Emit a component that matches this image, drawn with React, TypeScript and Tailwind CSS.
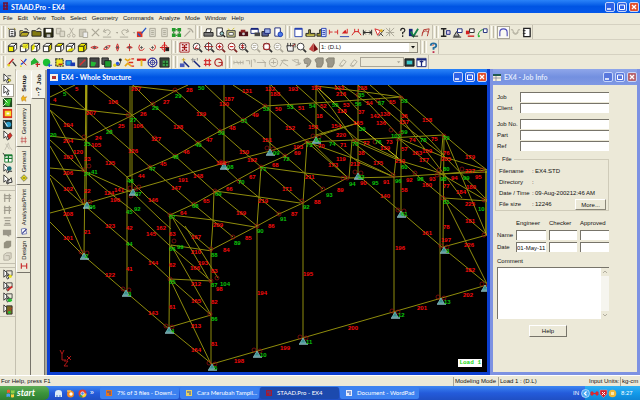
import React from "react";

type Pt = [number, number];

// members drawn as polylines, coordinates in canvas units
const members: Pt[][] = [
  // base lines
  [[50, 222], [84, 256], [127, 293], [169, 329], [212, 364], [487, 285]],
  [[50, 213], [84, 204], [160, 182], [224, 163], [270, 151], [330, 132], [358, 123]],
  // roof chords
  [[50, 97], [75, 85]],
  [[50, 104], [86, 110], [129, 115]],
  [[84, 139], [131, 116], [152, 104], [175, 91], [188, 85]],
  [[132, 86], [175, 91]],
  [[127, 177], [150, 167], [175, 156], [198, 143], [220, 131], [243, 120], [265, 106], [330, 102], [401, 97]],
  [[170, 215], [194, 204], [217, 191], [261, 167], [285, 156], [307, 142], [354, 140], [443, 135]],
  [[211, 250], [257, 226], [279, 214], [303, 203], [321, 192], [347, 178], [394, 177], [441, 174], [487, 170]],
  [[50, 136], [84, 140]],
  [[50, 168], [84, 171]],
  [[50, 110], [84, 139]],
  [[50, 140], [84, 171]],
  [[50, 175], [84, 205]],
  [[50, 110], [84, 171]],
  [[50, 146], [84, 205]],
  [[50, 178], [84, 256]],
  // columns
  [[86, 85], [84, 256]],
  [[87, 85], [86, 205]],
  [[132, 86], [132, 193]],
  [[130, 86], [130, 177]],
  [[127, 177], [127, 293]],
  [[170, 215], [169, 329]],
  [[214, 191], [213, 221], [211, 250], [211, 364]],
  [[261, 167], [259, 197], [257, 226], [257, 353]],
  [[307, 142], [305, 173], [303, 203], [303, 341]],
  [[398, 138], [394, 177], [394, 315]],
  [[352, 140], [349, 178]],
  [[443, 135], [440, 174], [440, 301]],
  [[444, 135], [443, 247]],
  [[401, 97], [401, 214]],
  [[358, 85], [358, 175]],
  [[270, 85], [270, 151]],
  [[224, 85], [224, 166]],
  [[316, 85], [316, 139]],
  // rafters across the bays
  [[50, 77], [86, 110], [110, 132], [150, 167], [193, 204], [233, 237]],
  [[84, 139], [110, 162], [127, 177], [148, 198], [170, 215], [211, 250]],
  [[93, 85], [132, 115], [155, 139], [175, 156], [214, 191], [257, 226]],
  [[84, 171], [110, 193], [132, 210], [169, 245], [211, 281]],
  [[84, 171], [133, 193], [160, 219], [171, 229]],
  [[84, 205], [128, 243], [153, 263], [169, 278], [211, 315]],
  [[152, 104], [198, 143], [239, 181], [279, 214]],
  [[175, 90], [220, 131], [261, 167], [303, 203]],
  [[205, 85], [224, 103], [243, 120], [285, 156], [323, 189]],
  [[233, 85], [265, 106], [307, 142], [347, 177]],
  [[271, 85], [290, 105], [330, 139], [358, 162], [394, 177]],
  [[296, 85], [316, 103], [358, 140], [401, 160]],
  [[133, 85], [152, 104]],
  // short bay diagonals
  [[171, 215], [213, 220], [255, 227]],
  [[215, 191], [259, 197], [300, 203]],
  [[261, 167], [305, 173], [347, 178]],
  [[307, 142], [358, 160], [394, 177]],
  [[171, 245], [212, 251]],
  [[170, 279], [212, 281]],
  [[170, 327], [211, 315]],
  [[171, 215], [208, 278]],
  [[171, 245], [211, 315]],
  [[170, 279], [211, 364]],
  [[185, 226], [218, 278]],
  // right hand frame
  [[388, 85], [427, 119], [444, 135], [470, 157], [487, 170]],
  [[358, 85], [401, 123], [443, 155], [487, 200]],
  [[370, 85], [401, 112], [430, 140], [444, 155]],
  [[398, 158], [420, 178], [444, 198], [487, 235]],
  [[354, 143], [394, 175]],
  [[312, 143], [347, 177]],
  [[358, 175], [401, 212], [443, 248], [487, 284]],
  [[444, 198], [487, 201]],
  [[443, 247], [487, 235]],
  [[444, 135], [487, 236]],
  [[444, 198], [487, 284]],
  [[398, 138], [444, 157], [487, 170]],
  [[352, 140], [398, 160], [440, 173]],
  [[398, 138], [441, 174], [487, 201]],
  [[401, 118], [444, 174], [462, 198]],
  [[441, 174], [487, 172]],
  [[316, 135], [358, 123]],
  [[316, 86], [358, 91], [401, 97]],
  [[335, 85], [358, 110]],
  [[342, 85], [370, 105], [401, 138]],
  [[316, 88], [333, 110], [354, 140]],
];

const brightMembers: Pt[][] = [
  [[86, 85], [86, 110]],
  [[318, 88], [360, 127], [398, 158]],
  [[486, 171], [486, 235]],
];

type Label = [string, number, number];

const memberLabels: Label[] = [
  ["5", 75, 91], ["4", 53, 102], ["207", 86, 115], ["207", 131, 91], ["106", 108, 104], ["26", 140, 116],
  ["25", 118, 128], ["104", 63, 127], ["24", 95, 140], ["204", 63, 143], ["105", 91, 147], ["106", 133, 128],
  ["103", 63, 159], ["120", 73, 154], ["23", 84, 161], ["125", 105, 165], ["126", 128, 153], ["127", 151, 141],
  ["206", 63, 175], ["44", 138, 178], ["102", 63, 191], ["22", 84, 193], ["124", 104, 195], ["141", 114, 192],
  ["190", 110, 202], ["146", 148, 202], ["208", 63, 216], ["21", 84, 234], ["101", 63, 240], ["123", 105, 228],
  ["42", 126, 230], ["145", 146, 236], ["144", 148, 265], ["41", 126, 271], ["122", 105, 277], ["143", 148, 315],
  ["28", 186, 92], ["27", 163, 104], ["129", 196, 116], ["128", 173, 129], ["131", 242, 93], ["132", 265, 91],
  ["188", 270, 96], ["193", 288, 91], ["134", 311, 90], ["130", 219, 106], ["187", 224, 101], ["50", 275, 111],
  ["51", 298, 110], ["52", 320, 108], ["49", 252, 117], ["18", 316, 118], ["152", 285, 130], ["153", 308, 129],
  ["48", 229, 130], ["47", 206, 142], ["151", 262, 142], ["46", 183, 154], ["45", 160, 166], ["150", 239, 154],
  ["192", 247, 162], ["193", 293, 149], ["69", 294, 155], ["70", 318, 148], ["68", 272, 167], ["189", 216, 165],
  ["67", 249, 179], ["191", 178, 182], ["148", 193, 178], ["147", 171, 190], ["66", 226, 191], ["65", 203, 203],
  ["64", 180, 215], ["171", 282, 191], ["169", 236, 215], ["219", 258, 203], ["211", 305, 179], ["209", 213, 227],
  ["88", 314, 204], ["87", 291, 216], ["86", 268, 228], ["162", 156, 230], ["63", 169, 236], ["167", 191, 239],
  ["85", 245, 240], ["84", 223, 252], ["210", 191, 254], ["62", 169, 267], ["166", 190, 270], ["193", 198, 265],
  ["83", 211, 273], ["212", 191, 286], ["98", 216, 291], ["165", 191, 303], ["61", 169, 309], ["82", 211, 304],
  ["213", 191, 328], ["81", 211, 346], ["164", 191, 352], ["198", 234, 363], ["199", 280, 350], ["194", 257, 295],
  ["195", 303, 276], ["196", 395, 250], ["200", 348, 330], ["201", 417, 310], ["202", 463, 297], ["182", 465, 272],
  ["226", 464, 247], ["197", 441, 242], ["78", 443, 229], ["161", 422, 235], ["181", 465, 223], ["77", 443, 188],
  ["225", 465, 206], ["180", 466, 189], ["184", 456, 194], ["95", 475, 179], ["227", 465, 173], ["179", 465, 159],
  ["76", 443, 155], ["205", 441, 161], ["75", 431, 141], ["158", 422, 122], ["55", 389, 104], ["54", 366, 105],
  ["53", 343, 107], ["133", 334, 90], ["216", 336, 96], ["138", 357, 90], ["37", 358, 114], ["142", 370, 118],
  ["138", 380, 116], ["136", 376, 125], ["165", 353, 125], ["154", 331, 128], ["118", 337, 113], ["36", 401, 118],
  ["157", 399, 124], ["220", 336, 137], ["71", 340, 147], ["72", 363, 145], ["73", 386, 144], ["74", 409, 142],
  ["139", 380, 150], ["57", 401, 151], ["183", 412, 155], ["159", 422, 153], ["177", 419, 162], ["38", 358, 155],
  ["119", 336, 161], ["173", 328, 167], ["212", 350, 166], ["175", 373, 165], ["210", 395, 163], ["91", 383, 184],
  ["92", 406, 182], ["93", 429, 181], ["94", 451, 180], ["90", 360, 185], ["160", 422, 187], ["89", 337, 192],
  ["58", 401, 192], ["140", 380, 198],
];

const nodeLabels: Label[] = [
  ["5", 63, 96], ["29", 152, 110], ["27", 130, 122], ["20", 50, 137], ["28", 106, 134], ["25", 84, 146],
  ["41", 91, 174], ["24", 84, 176], ["47", 149, 171], ["48", 127, 183], ["07", 135, 196], ["06", 89, 209],
  ["92", 134, 211], ["45", 126, 214], ["2", 85, 258], ["44", 126, 246], ["3", 128, 296], ["29", 175, 98],
  ["50", 198, 90], ["52", 263, 111], ["53", 287, 109], ["54", 309, 108], ["51", 241, 123], ["50", 218, 135],
  ["49", 195, 147], ["48", 172, 159], ["08", 227, 169], ["09", 273, 155], ["72", 283, 161], ["73", 306, 147],
  ["01", 315, 142], ["71", 260, 171], ["70", 238, 184], ["69", 215, 196], ["68", 192, 208], ["67", 169, 219],
  ["92", 303, 209], ["91", 280, 221], ["90", 257, 233], ["89", 234, 245], ["99", 177, 249], ["66", 169, 251],
  ["88", 211, 257], ["104", 220, 286], ["65", 169, 284], ["87", 211, 287], ["86", 211, 321], ["4", 171, 333],
  ["5", 214, 370], ["10", 260, 357], ["11", 306, 344], ["12", 398, 317], ["13", 444, 304], ["3", 446, 253],
  ["55", 332, 107], ["56", 355, 106], ["57", 378, 105], ["58", 401, 103], ["39", 359, 131], ["35", 358, 97],
  ["59", 401, 134], ["102", 391, 138], ["74", 329, 146], ["75", 352, 146], ["76", 375, 144], ["78", 420, 142],
  ["79", 443, 140], ["60", 401, 169], ["80", 443, 171], ["94", 349, 186], ["95", 372, 185], ["96", 395, 183],
  ["98", 417, 181], ["98", 440, 181], ["99", 463, 180], ["33", 358, 179], ["61", 401, 216], ["81", 443, 204],
  ["10", 478, 211], ["93", 326, 197],
];

const supports: Pt[] = [
  [84, 257], [126, 294], [169, 331], [212, 368], [257, 355], [303, 342], [395, 316], [441, 302], [485, 289],
  [444, 251], [401, 215], [358, 177], [316, 141], [270, 153], [224, 167], [133, 193], [87, 206],
];

const nodes: Pt[] = [
  [128, 115], [84, 137], [89, 166], [131, 196], [139, 187], [84, 170], [155, 138], [175, 90], [153, 104], [110, 131],
  [220, 131], [243, 120], [265, 106], [198, 143], [175, 156], [150, 167], [261, 167], [239, 181], [215, 191],
  [194, 204], [170, 215], [279, 214], [302, 201], [257, 226], [233, 237], [211, 249], [211, 281], [217, 278],
  [174, 241], [170, 279], [210, 314], [307, 142], [285, 156], [323, 189], [347, 178], [343, 178], [393, 175],
  [415, 173], [439, 170], [437, 175], [462, 169], [482, 170], [355, 141], [375, 142], [398, 139], [391, 130],
  [401, 133], [444, 136], [358, 95], [316, 86], [401, 98], [378, 101], [443, 198], [484, 200], [484, 235],
];

const toPoints = (pts: Pt[]) => pts.map((p) => p.join(",")).join(" ");

function StructureView() {
  return (
    <svg
      viewBox="50 85 437 287"
      preserveAspectRatio="xMinYMin slice"
      className="h-full w-full font-['Liberation_Sans',sans-serif] text-[6px] font-bold"
      role="img"
      aria-label="Whole structure"
    >
      <g fill="none" stroke="#8f8c0c" strokeWidth="1">
        {members.map((m, i) => (
          <polyline key={i} points={toPoints(m)} />
        ))}
      </g>
      <g fill="none" stroke="#e0da1c" strokeWidth="1">
        {brightMembers.map((m, i) => (
          <polyline key={i} points={toPoints(m)} />
        ))}
      </g>
      <g fill="none" stroke="#a01010" strokeWidth="0.7">
        {nodes.map(([x, y], i) => (
          <circle key={i} cx={x} cy={y} r="2" />
        ))}
        {supports.map(([x, y], i) => (
          <React.Fragment key={i}>
            <circle cx={x - 3} cy={y - 5} r="2" />
            <circle cx={x + 3} cy={y - 4} r="2" />
          </React.Fragment>
        ))}
      </g>
      {supports.map(([x, y], i) => (
        <g key={i}>
          <path d={`M${x} ${y - 4} l3 5 h-6z`} fill="#3d8f8f" stroke="#7fc4c4" strokeWidth="0.7" />
          <path d={`M${x - 4} ${y + 2} h9`} stroke="#8fc9cf" strokeWidth="1.4" />
        </g>
      ))}
      <g fill="#f80c0c">
        {memberLabels.map(([t, x, y], i) => (
          <text key={i} x={x} y={y}>{t}</text>
        ))}
      </g>
      <g fill="#0cc40c">
        {nodeLabels.map(([t, x, y], i) => (
          <text key={i} x={x} y={y}>{t}</text>
        ))}
      </g>
      <g stroke="#c01818" fill="none" strokeWidth="0.9">
        <path d="M60 350 l2 4 l2 -4 M62 354 v6 h4 M67 356 l4 4 M71 356 l-4 4 M64 361 h4 l-4 5 h4" />
      </g>
    </svg>
  );
}

/* ---------- toolbar icons, 12 x 12 grid ---------- */

const cube = (face: string) => (
  <>
    <path d="M1.5 4.5h6v6h-6z" fill={face === "front" || face === "all" ? "#f4f000" : "#fff"} stroke="#222" />
    <path d="M1.5 4.5l3-3h6l-3 3z" fill={face === "top" || face === "all" ? "#f4f000" : "#fff"} stroke="#222" />
    <path d="M7.5 4.5l3-3v6l-3 3z" fill={face === "side" || face === "all" ? "#d8d000" : "#fff"} stroke="#222" />
    {face === "back" && <path d="M4 2h6v5H4z" fill="#e8e400" opacity=".8" />}
    {face === "bottom" && <path d="M2 10l3-3h5l-3 3z" fill="#e8e400" />}
    {face === "left" && <path d="M2 10V5l3-3v5z" fill="#e8e400" />}
  </>
);

const lens = (inner: React.ReactNode, c = "#333") => (
  <>
    <circle cx="5" cy="5" r="3.7" fill="#fff" stroke={c} />
    <path d="M8 8l3 3" stroke={c} strokeWidth="1.8" />
    {inner}
  </>
);

const spin = (d: string) => (
  <g fill="none" stroke="#cf2222">
    <path d={d} />
    <path d="M6 4.5v3M4.5 6h3" stroke="#555" />
  </g>
);

const cursor = (extra: React.ReactNode) => (
  <>
    <path d="M2 1v8l2-2 2 4 1.5-1-2-3.5H8z" fill="#fff" stroke="#222" strokeWidth=".9" />
    {extra}
  </>
);

const glyphs: Record<string, React.ReactNode> = {
  new: <><path d="M2.5 2.5h6v8h-6z" fill="#fff" stroke="#333" /><path d="M4 5h3M4 7h3M4 9h3M9 5v5" stroke="#333" /><path d="M1 1l2 2M8 1l1 2" stroke="#9a8a20" /></>,
  open: <><path d="M1 10V4h3l1 1h4v2" fill="#e8d840" stroke="#333" /><path d="M1 10l2-4h8l-2 4z" fill="#b8a820" stroke="#333" /><path d="M6 2q3-1 4 2" fill="none" stroke="#333" /></>,
  folder: <><path d="M1 10V4h4l1 1h5v5z" fill="#827a10" stroke="#222" /><path d="M6 3l3-2 2 2" fill="none" stroke="#333" /></>,
  save: <><path d="M1 1.5h10V11H1z" fill="#2e2e12" stroke="#111" /><path d="M3 2h6v4H3z" fill="#fff" /><path d="M4 8h4v3H4z" fill="#bbb" /></>,
  copy: <g fill="#ddd9ca" stroke="#aaa697"><path d="M1.5 1.5h5v6h-5z" /><path d="M5.5 4.5h5v6h-5z" /></g>,
  cut: <path d="M4 1l4 7M8 1L4 8M3 8a1.5 1.5 0 100 3 1.5 1.5 0 000-3M8.5 8a1.5 1.5 0 100 3 1.5 1.5 0 000-3" fill="none" stroke="#b2ae9f" />,
  paste: <g fill="#ccc8b8" stroke="#aaa697"><path d="M1.5 2.5h7v8h-7z" /><path d="M5.5 5.5h5v6h-5z" fill="#eee" /></g>,
  del: <path d="M2 2l8 8M10 2l-8 8" stroke="#aaa697" strokeWidth="1.3" />,
  undo: <path d="M3 2L1.5 5l3 1M2 5q5-4 7 0 0 3-3 4M1 11h9" fill="none" stroke="#aaa697" />,
  redo: <path d="M9 2l1.5 3-3 1M10 5q-5-4-7 0 0 3 3 4M1 11h9" fill="none" stroke="#aaa697" />,
  down: <path d="M3 5h5L5.5 8z" fill="#aaa697" />,
  cancel: <><path d="M1 5h6v6H1z" fill="#e03020" /><path d="M11 1L6 7M2 7l3 3" stroke="#2456c8" strokeWidth="1.5" /></>,
  calc: <g fill="#e2dfd0" stroke="#aaa697"><path d="M3 1.5h6v9H3z" /><path d="M4.5 4h3M4.5 6h3M4.5 8h3" /></g>,
  grid: <><path d="M1 1h4v4H1zM7 1h4v4H7zM1 7h4v4H1zM7 7h4v4H7z" fill="#219b2a" /><path d="M3 5v2M9 5v2M5 3h2M5 9h2" stroke="#174d1b" /></>,
  hammer: <path d="M1.5 10.5L8 4M5 2q4-1 6 4" fill="none" stroke="#aaa697" strokeWidth="1.4" />,
  print: <><path d="M1 6h10v4H1z" fill="#777" stroke="#222" /><path d="M3 6l1-4h5l-1 4z" fill="#fff" stroke="#222" /></>,
  preview: <><path d="M2 1h6v9H2z" fill="#fff" stroke="#222" /><circle cx="7.5" cy="7" r="2" fill="#9cc" stroke="#222" /><path d="M9 9l2 2" stroke="#111" strokeWidth="1.5" /></>,
  report: <><path d="M1 4h9v7H1z" fill="#d9d790" stroke="#333" /><path d="M3 6h5v3H3z" fill="#fff" stroke="#555" /><path d="M2 2l2 1M9 1L7 3" stroke="#c8b820" /></>,
  camera: <><path d="M1 5h10v5H1z" fill="#4b1018" /><path d="M3 3h5v3H3z" fill="#8c2020" /><circle cx="6" cy="7.5" r="1.5" fill="#ccc" /></>,
  film: <><path d="M1 2h8v5H1z" fill="#fff" stroke="#17247a" /><path d="M1 2h8" stroke="#17247a" strokeWidth="2" /><path d="M5 6h6v4H5z" fill="#444" /></>,
  stack: <><path d="M1 5h7v5H1z" fill="#56609a" stroke="#222" /><path d="M4 2h6v5H4z" fill="#9fb2e8" stroke="#17247a" /></>,
  docblue: <><path d="M2 1h6v9H2z" fill="#fff" stroke="#17247a" /><circle cx="8" cy="8" r="2.5" fill="#4a7be8" stroke="#1838b0" /></>,
  page: <><path d="M2 1.5h8v9H2z" fill="#fff" stroke="#2540b0" /><path d="M2 2h8" stroke="#2540b0" strokeWidth="2" /></>,
  load: <><path d="M1 10V7h3V3h2v4h5v3z" fill="#9a9330" stroke="#222" /><path d="M2 9h8" stroke="#dfd860" /></>,
  loadblue: <><path d="M1 10V7h3V3h2v7z" fill="#9a9330" stroke="#222" /><path d="M6 1.5h5v9H6z" fill="#dde4ff" stroke="#2540b0" /><path d="M7 4h3M7 6h3M7 8h3" stroke="#2540b0" /></>,
  dim: <path d="M1.5 3v5M10.5 3v5M2 5.5h3M7 5.5h3" stroke="#d42020" fill="none" />,
  dimload: <><path d="M3 7h6L7 3z" fill="#d42020" /><path d="M1 10.5h10" stroke="#2540b0" /><path d="M9 2v5" stroke="#d42020" /></>,
  moment: <path d="M1 9l3-4h4l3 4M4 2v4M8 2v4" fill="none" stroke="#d42020" />,
  width: <path d="M1.5 3v6M10.5 3v6M2 6h8M4 4L2 6l2 2M8 4l2 2-2 2" fill="none" stroke="#222" />,
  cutred: <><path d="M1 2l6 2-3 5z" fill="#fff" stroke="#d42020" /><path d="M5 10l6-7M7 7l3 3" stroke="#333" /><circle cx="8" cy="4" r="1.5" fill="#e0b020" /></>,
  hatch: <path d="M1 1l9 9M10 1L1 10M5 1v9M1 6h9" stroke="#aaa697" fill="none" />,
  query: <path d="M4 4q0-2.5 2.3-2.5T8.500 4Q8 5.5 6.2 6v2M6.2 9v1.8" fill="none" stroke="#222" strokeWidth="1.3" />,
  check: <><path d="M1 2h4v8H1z" fill="#17247a" /><path d="M3 5l3 5 5-8" fill="none" stroke="#14804a" strokeWidth="2" /><path d="M4 10h7" stroke="#222" /></>,
  script: <path d="M2 10l2-7 6-1-2 8M2 7q4-5 7-1" fill="none" stroke="#b03028" />,
  beam: <><path d="M1 2h6M1 10h6M4 2v8" stroke="#222" strokeWidth="1.6" /><path d="M7 4h4v4H7z" fill="#dce" stroke="#17247a" /></>,
  support: <><path d="M2 10l3-5 3 5z" fill="#bbb" stroke="#222" /><path d="M6 2h5v4H6z" fill="#fff" stroke="#17247a" /><path d="M1 11h9" stroke="#222" /></>,
  relred: <><path d="M1 4h4v4H1z" fill="#d42020" /><path d="M5 2h5v4H5z" fill="#fff" stroke="#222" /><path d="M3 10h7" stroke="#d42020" strokeWidth="1.5" /></>,
  curve: <><path d="M1 9q2-7 7-6" fill="none" stroke="#1b8f2a" /><path d="M7 2h4v4H7z" fill="#fff" stroke="#17247a" /><circle cx="2" cy="10" r="1.2" fill="#2ac030" /></>,
  arch: <path d="M2 10V6q0-4 4-4t4 4v4" fill="none" stroke="#4b4ab8" strokeWidth="1.2" />,
  sag: <path d="M1 3h2q0 4 3 4t3-4h2M3 6q3 4 6 0" fill="none" stroke="#aaa697" />,
  box: <><path d="M3 1.5h7v9H3z" fill="#fff" stroke="#222" strokeWidth="1.4" /><path d="M2 4h3M2 7h3" stroke="#222" /></>,
  front: cube("front"), back: cube("back"), left: cube("left"), right: cube("side"), top: cube("top"), bottom: cube("bottom"), iso: cube("all"),
  rotA: spin("M2 6q4-3 8 0M2 6q4 3 8 0"),
  rotB: spin("M3 8q1-4 7-4M3 8q5 1 7-4"),
  rotC: spin("M6 2q-3 4 0 8M6 2q3 4 0 8"),
  rotD: spin("M6 2v8M3 6q3-3 6 0M3 6q3 2 6 0"),
  rotE: spin("M4 3q-2 3 0 6 4 1 5-2"),
  rotF: spin("M8 3q3 3-1 6-3 1-4-2"),
  target: <><path d="M6 0v11M1 6h10" stroke="#d42020" strokeWidth="1.3" /><circle cx="6" cy="6" r="3" fill="none" stroke="#d42020" /><path d="M7 6h4v4H7z" fill="#222" /></>,
  whole: <><path d="M1 1h10v10H1z" fill="#fff" stroke="#a01818" /><path d="M3 3h2M7 3h2M3 6h6M6 3v6M3 9h2M7 9h2" stroke="#a01818" strokeWidth="1.4" /></>,
  zoomwin: lens(<path d="M6 3l-3 4h4" stroke="#b02020" fill="none" />),
  zoomdyn: lens(<path d="M5 0v10M0 5h10" stroke="#a02020" />),
  zoomin: lens(<path d="M5 3v4M3 5h4" stroke="#d42020" strokeWidth="1.3" />, "#7a2020"),
  zoomout: lens(<path d="M3 5h4" stroke="#d42020" strokeWidth="1.3" />, "#7a2020"),
  zoomall: lens(<path d="M5 2v6M3 4h4M3 6h4" stroke="#a02020" />),
  zoomoff: lens(<path d="M3 4h4M3 6h3" stroke="#aaa697" />, "#aaa697"),
  zoomfit: lens(<path d="M2 2h6v6H2z" fill="none" stroke="#b02020" />),
  pan: <><path d="M2 4h7v6H3z" fill="#eee" stroke="#333" /><path d="M3 1v4M6 1v4M8 2h3v4" fill="none" stroke="#333" /><path d="M8 5l3-3" stroke="#b02020" /></>,
  zoom: lens(null),
  cone: <><path d="M6 1l5 7-5 3z" fill="#7a1014" /><path d="M6 1L1 8l5 3z" fill="#c04440" /></>,
  help: <><path d="M3 4q0-2.500 3-2.500t3 2.500q0 1.500-3 2.500v2" fill="none" stroke="#266fa0" strokeWidth="2" /><path d="M5 4q0-1 1.500-1" fill="none" stroke="#d04030" /><path d="M5 10h2v2H5z" fill="#c03050" /></>,
  lineA: <><path d="M1 9l6-7" stroke="#c02020" strokeWidth="1.5" /><path d="M6 5l4 5" stroke="#333" strokeWidth="1.3" /><circle cx="2" cy="9" r="1.4" fill="#e4d820" /></>,
  lineB: <><path d="M2 8q3-1 6-6" stroke="#2450d8" strokeWidth="1.5" fill="none" /><path d="M2 3l6 6" stroke="#c02020" /><circle cx="2" cy="10" r="1" fill="#e4d820" /></>,
  plateA: <><path d="M1 9V5l4-4 5 5-4 1z" fill="#22b030" /><path d="M6 8h5M8 6v5" stroke="#c02020" strokeWidth="1.3" /></>,
  plateB: <><circle cx="5" cy="6" r="4" fill="#18c030" /><path d="M8 7v4M6 9h5" stroke="#2450d8" strokeWidth="1.3" /></>,
  mesh: <><path d="M2 2h8v8H2z" fill="#f0e820" stroke="#333" strokeDasharray="2 1" strokeWidth="1.3" /><path d="M5 8h4" stroke="#c02020" strokeWidth="1.5" /></>,
  solid: <><path d="M1 4h6v5H1z" fill="#24a0d8" stroke="#1838b0" /><path d="M6 6h5v4H6z" fill="#1838b0" /></>,
  darkA: <><path d="M1 1h10v10H1z" fill="#555" stroke="#222" /><path d="M3 9l6-6" stroke="#e03030" strokeWidth="1.5" /></>,
  darkB: <><path d="M1 1h10v10H1z" fill="#444" stroke="#222" /><path d="M2 10V5l6 1-2 4z" fill="#24b834" /></>,
  darkC: <><path d="M1 1h7v7H1z" fill="#555" stroke="#222" /><path d="M4 4h7v7H4z" fill="#1c9c2c" stroke="#222" /></>,
  nodes: <><path d="M2 9h6l2-6" stroke="#333" fill="none" /><circle cx="3" cy="9" r="1.8" fill="#e4d820" /><circle cx="6" cy="7" r="1.8" fill="#2450d8" /><circle cx="9" cy="3" r="1.5" fill="#222" /></>,
  mirror: <><path d="M1 2l3 2 3-2M1 10l3-3 4 3" fill="none" stroke="#e8a818" strokeWidth="1.8" /><path d="M8 2h3M5 6h5M8 10h3" stroke="#d83020" strokeWidth="1.5" /></>,
  tee: <><path d="M1 3h10" stroke="#d42020" strokeWidth="2.500" /><path d="M6 3v7" stroke="#e4b820" strokeWidth="2" /></>,
  rings: <g fill="none" stroke="#2a2f98"><circle cx="6" cy="6" r="4.8" strokeWidth="1.3" /><circle cx="6" cy="6" r="2.5" /><path d="M6 1v10M1 6h10" strokeWidth=".6" /></g>,
  darkD: <><path d="M1 1h10v10H1z" fill="#384038" stroke="#222" /><path d="M4 4h6v6H4z" fill="#38a048" /><path d="M4 7h6M7 4v6" stroke="#1a401c" /></>,
  wand: <><path d="M5 5l6 6" stroke="#17247a" strokeWidth="1.6" /><path d="M1 7h5v4H1z" fill="#4a58b8" /><path d="M5 1v4M3 3h4" stroke="#c8a020" /></>,
  wandB: <><path d="M4 4l7 7" stroke="#17247a" strokeWidth="1.6" /><path d="M3 1v5M1 3h5M8 1v3" stroke="#888" /></>,
  hash: <path d="M4 2v8M8 2v8M2 4h8M2 8h8" stroke="#d43030" strokeWidth="1.3" />,
  circ: <><circle cx="6" cy="6" r="4" fill="none" stroke="#b02828" strokeWidth="1.3" /><path d="M6 6h4v4" stroke="#b02828" fill="none" /></>,
  ghA: <path d="M1 4v4M4 4l2 4M8 4v4M11 4v4M1 6h10" stroke="#b2ae9f" fill="none" />,
  ghB: <path d="M1 4h4v4M7 3v8M9 3h2v3" stroke="#b2ae9f" fill="none" />,
  ghC: <path d="M1 6h10M7 3l3 3v5" stroke="#b2ae9f" fill="none" />,
  ghD: <path d="M6 1.5a4.5 4.5 0 100 9 4.5 4.5 0 000-9M3 6h6M6 3v5" stroke="#b2ae9f" fill="none" />,
  ghE: <path d="M1 10l4-7 5 1M4 6l6 4M2 4h6" stroke="#b2ae9f" fill="none" />,
  ghF: <path d="M1 3l5 3 5 1M5 9l5-1M3 3h5v5" stroke="#b2ae9f" fill="none" />,
  ghG: <path d="M2 3q4-4 8 1L8 9 5 11 6 7 3 7z" fill="#a29e90" stroke="#8a8678" />,
  ghH: <path d="M1 3l3-2h6v6l-2 4H3V7z" fill="#9a9688" stroke="#848072" />,
  ghI: <path d="M3 8l4-5 3 2-4 5zM2 9q3 3 5 0" fill="none" stroke="#b2ae9f" />,
  chip: <><path d="M1 2h10v8H1z" fill="#2a3838" stroke="#111" /><path d="M3 4h6v4H3z" fill="#38c8c8" /></>,
  table: <><path d="M1 1.5h10v9H1z" fill="#fff" stroke="#17247a" /><path d="M1 3h10M6 4v6M4 5h4" stroke="#17247a" strokeWidth="1.4" /></>,
  curNode: cursor(<><circle cx="8" cy="8" r="1.5" fill="#f0e820" stroke="#333" strokeWidth=".5" /><path d="M6 3h4" stroke="#555" /></>),
  curBeam: cursor(null),
  curPlate: <><path d="M1 1h10v10H1z" fill="#1d4a1d" /><path d="M3 3l7-1-2 8-5-1z" fill="#35c52e" /><path d="M1 1l5 5M1 10l3-3" stroke="#fff" /></>,
  curSolid: <><path d="M1 1h10v10H1z" fill="#d83020" /><path d="M3 3h7v6H3z" fill="#f4dc28" /><path d="M5 5h3v2H5z" fill="#fff" /></>,
  curSurf: <><path d="M1 1h10v10H1z" fill="#1b3030" /><circle cx="7" cy="6" r="3" fill="#2a9cc8" /><path d="M2 2l4 6" stroke="#fff" /></>,
  curGeo: cursor(<path d="M6 6l3-3 2 3-3 4z" fill="#d03028" stroke="#501010" strokeWidth=".5" />),
  curGrey: <path d="M3 10l4-8 1 4 3 4M4 3l4 6" fill="none" stroke="#c2beb0" />,
  curTable: <><path d="M3 3h8v8H3z" fill="#fff" stroke="#187a30" /><path d="M3 4h8M3 7h8M7 4v7" stroke="#187a30" strokeWidth="1.3" /><path d="M1 1l3 4" stroke="#333" /></>,
  curText: cursor(<><circle cx="8" cy="6" r="2.5" fill="#17707a" /><path d="M7 9h4" stroke="#222" /></>),
  curEdit: cursor(<path d="M5 10l5-6 1 5z" fill="#eee" stroke="#333" />),
  gA: <path d="M3 11V2M8 11V2M2 7h8M2 4h8" stroke="#a29e90" fill="none" strokeWidth="1.3" />,
  gB: <path d="M2 2h8M2 10h8M3 5h6M3 8h6" stroke="#a29e90" fill="none" strokeWidth="1.3" />,
  gC: <path d="M1 3h9v6H8v2L5 9H1z" fill="#9a9688" />,
  gD: <path d="M2 4l3-2h5v6l-3 2H2z" fill="#94907f" />,
  gE: <path d="M2 4l3-2h5v6l-3 2H2zM4 5h4v4" fill="#ddd9ca" stroke="#b2ae9f" />,
  sA: cursor(<><path d="M5 2h6v5H5z" fill="none" stroke="#444" /><circle cx="9" cy="8" r="1.8" fill="#e8e020" /></>),
  sB: cursor(<><path d="M5 2h6v5H5z" fill="none" stroke="#444" /><path d="M6 10l5-4" stroke="#d02828" strokeWidth="2" /></>),
  sC: cursor(<><path d="M5 2h6v5H5z" fill="none" stroke="#444" /><path d="M6 9h5M8.500 7v4" stroke="#22c030" strokeWidth="2" /></>),
  sD: cursor(<><path d="M5 2h6v9H5z" fill="#7a6a20" stroke="#333" /><path d="M6 9l5-5" stroke="#d02828" /><circle cx="8" cy="9" r="1.5" fill="#22c030" /></>),
  setup: <path d="M2 6l3-4 1 3 4-1-2 3 1 4-3-2-3 2z" fill="#f0b818" stroke="#b06810" strokeWidth=".6" />,
  geom: <path d="M3 1v10M8 1v10M1 4h9M1 8h9" stroke="#c04848" />,
  general: <><path d="M6 1l5 5-5 5-5-5z" fill="#ecdf18" stroke="#555" /><path d="M4 6h4" stroke="#222" /></>,
  analysis: <><path d="M2 3l6-1 2 8-7 1z" fill="#fff" stroke="#404898" /><path d="M3 10L10 3" stroke="#404898" strokeWidth="1.6" /></>,
  design: <path d="M2 2v8M10 2v8M2 6h8" stroke="#c83030" strokeWidth="1.8" />,
};

function Icon({ name, size = "size-[11px]" }: { name: string; size?: string }) {
  return (
    <svg viewBox="0 0 12 12" className={`${size} shrink-0`} aria-hidden="true">
      {glyphs[name]}
    </svg>
  );
}

function ToolGroup({ names, width, active, children }: { names: string; width: string; active?: string; children?: React.ReactNode }) {
  return (
    <div className={`flex h-full items-center border-r border-[#c4c0b0] pr-px ${width}`}>
      <Grip />
      <div className="flex flex-1 items-center justify-between">
        {names.split(" ").map((n, i) => (
          <button
            key={i}
            type="button"
            aria-label={n}
            className={
              n === "down"
                ? "w-1 overflow-hidden"
                : n === active
                  ? "border border-[#aaa697] bg-[#faf9f4]"
                  : ""
            }
          >
            <Icon name={n} size={n === "down" ? "size-[7px]" : "size-[11px]"} />
          </button>
        ))}
        {children}
      </div>
    </div>
  );
}

function Grip() {
  return (
    <span className="mx-px flex h-3 gap-px">
      <i className="w-px bg-[#fbfaf5]" />
      <i className="w-px bg-[#bdb9a9]" />
      <i className="w-px bg-[#fbfaf5]" />
    </span>
  );
}

function WindowButtons({ dim = false }: { dim?: boolean }) {
  const blue = dim ? "bg-[#5877dd]" : "bg-[#2f62e6]";
  const red = dim ? "bg-[#b7656f]" : "bg-[#e2512c]";
  const cls = "grid size-[10px] place-items-center rounded-[2px] border border-[#c6d5fa]";
  return (
    <div className="flex gap-[2px]">
      <button type="button" aria-label="Minimize" className={`${cls} ${blue}`}>
        <svg viewBox="0 0 8 8" className="size-2"><path d="M1 6h4" stroke="#fff" strokeWidth="1.5" /></svg>
      </button>
      <button type="button" aria-label="Maximize" className={`${cls} ${blue}`}>
        <svg viewBox="0 0 8 8" className="size-2"><path d="M1.5 2h5v4.5h-5z" fill="none" stroke="#fff" /></svg>
      </button>
      <button type="button" aria-label="Close" className={`${cls} ${red}`}>
        <svg viewBox="0 0 8 8" className="size-2"><path d="M2 2l4 4M6 2L2 6" stroke="#fff" strokeWidth="1.3" /></svg>
      </button>
    </div>
  );
}

const menus = ["File", "Edit", "View", "Tools", "Select", "Geometry", "Commands", "Analyze", "Mode", "Window", "Help"];

function Toolbars() {
  return (
    <div className="shrink-0">
      <div className="flex h-[15px] border-t border-[#d5d1c1]">
        <ToolGroup width="w-[196px]" names="new open folder save copy cut paste del undo down redo down cancel calc calc grid hammer" />
        <ToolGroup width="w-[90px]" names="print preview report camera film stack docblue" />
        <ToolGroup width="w-[147px]" names="page load loadblue dim dimload moment width cutred hatch query check script" />
        <ToolGroup width="w-[57px]" names="beam support relred curve" />
        <ToolGroup width="w-[43px]" names="arch sag box" active="arch" />
      </div>
      <div className="flex h-[15px] border-t border-[#d5d1c1]">
        <ToolGroup width="w-[172px]" names="front back left right top bottom iso rotA rotB rotC rotD rotE rotF target" />
        <div className="flex h-full items-center border-r border-[#c4c0b0] pr-[2px]">
          <Grip />
          <button type="button" aria-label="whole" className="mr-[2px]"><Icon name="whole" /></button>
          <div className="flex w-[127px] justify-between">
            {"zoomwin zoomdyn zoomin zoomout zoomall zoomoff zoomfit zoomoff pan zoom cone".split(" ").map((n, i) => (
              <button key={i} type="button" aria-label={n}><Icon name={n} /></button>
            ))}
          </div>
          <LoadSelect />
        </div>
        <ToolGroup width="w-[18px]" names="help" />
      </div>
      <div className="flex h-[15px] border-t border-[#d5d1c1]">
        <ToolGroup width="w-[172px]" names="lineA lineB plateA plateB mesh solid darkA darkB darkC nodes mirror tee rings darkD" />
        <ToolGroup width="w-[54px]" names="wand wandB hash circ" />
        <ToolGroup width="w-[203px]" names="ghA ghB ghC ghD ghE ghF ghG ghH ghH ghI ghI">
          <label className="flex h-[10px] w-[44px] items-center justify-end border border-[#aaa697] bg-[#ece9d8]">
            <select aria-label="View" disabled className="w-full appearance-none" />
            <span className="grid h-full w-2 shrink-0 place-items-center"><Icon name="down" size="size-2" /></span>
          </label>
          <button type="button" aria-label="chip"><Icon name="chip" /></button>
          <button type="button" aria-label="table"><Icon name="table" /></button>
        </ToolGroup>
      </div>
    </div>
  );
}

function LoadSelect() {
  return (
    <label className="flex h-[11px] w-[99px] items-center border border-[#8a8678] bg-white">
      <select aria-label="Load case" className="h-[9px] w-full appearance-none bg-white pl-px text-[6px] leading-[9px]">
        <option>1: (D.L)</option>
      </select>
      <span className="grid h-full w-2 shrink-0 place-items-center bg-[#ece9d8]">
        <svg viewBox="0 0 6 6" className="size-[6px]"><path d="M1 2h4L3 4.500z" fill="#111" /></svg>
      </span>
    </label>
  );
}

function SideTools() {
  const col = "flex flex-col items-center justify-between border-b border-[#c4c0b0] py-px";
  const item = (n: string, i: number) => (
    <button key={i} type="button" aria-label={n} className={n === "curBeam" ? "border border-[#aaa697] bg-white" : ""}>
      <Icon name={n} />
    </button>
  );
  return (
    <div className="flex w-4 shrink-0 flex-col border-r border-[#c4c0b0] pt-[3px]">
      <div className={`${col} h-[114px]`}>
        {"curNode curBeam curPlate curSolid curSurf curGeo curGrey curTable curText curEdit".split(" ").map(item)}
      </div>
      <div className={`${col} mt-1 h-[74px] border-t`}>{"gA gA gB gC gD gE".split(" ").map(item)}</div>
      <div className={`${col} mt-[3px] h-[50px] border-t`}>{"sA sB sC sD".split(" ").map(item)}</div>
    </div>
  );
}

function VTab({ label, icon, height, active = false }: { label: string; icon: string; height: string; active?: boolean }) {
  return (
    <button
      type="button"
      className={`flex w-full flex-col items-center justify-end gap-[2px] rounded-l-[2px] border-b border-l border-b-[#77746a] border-l-white pb-[2px] ${height} ${active ? "bg-[#f2f0e5] font-bold" : "border-r border-r-[#77746a]"}`}
    >
      <span className="rotate-180 text-[6px] leading-[8px] [writing-mode:vertical-rl]">{label}</span>
      {icon ? <Icon name={icon} size="size-[8px]" /> : <span className="rotate-180 text-[7px] leading-[8px] font-bold [writing-mode:vertical-rl]">··?</span>}
    </button>
  );
}

function ModeTabs() {
  return (
    <div className="flex w-[31px] shrink-0 pt-px">
      <div className="flex w-[15px] flex-col">
        <VTab label="Setup" icon="setup" height="h-[35px]" active />
        <VTab label="Geometry" icon="geom" height="h-[42px]" />
        <VTab label="General" icon="general" height="h-[38px]" />
        <VTab label="Analysis/Print" icon="analysis" height="h-[53px]" />
        <VTab label="Design" icon="design" height="h-[35px]" />
        <span className="flex-1 border-r border-[#77746a]" />
      </div>
      <div className="flex w-[14px] flex-col">
        <VTab label="Job" icon="" height="h-[29px]" active />
        <span className="flex-1 border-r border-[#77746a]" />
      </div>
      <span className="w-[2px] bg-[#aaa697]" />
    </div>
  );
}

const fieldCls = "h-[10px] min-w-0 border-t border-l border-[#77746a] bg-white text-[6px] leading-[8px]";

function Field({ id, label }: { id: string; label: string }) {
  return (
    <div className="flex items-center">
      <label htmlFor={id} className="w-[23px] shrink-0">{label}</label>
      <input id={id} className={`${fieldCls} flex-1`} />
    </div>
  );
}

function JobInfo() {
  const fileRows = [
    ["Filename", "EX4.STD"],
    ["Directory", ""],
    ["Date / Time", "09-Aug-2002"],
    ["File size", "12246"],
  ];
  return (
    <section className="flex w-[150px] shrink-0 flex-col bg-[#7d92e2] px-[3px] pb-[3px]">
      <header className="flex h-4 shrink-0 items-center gap-[3px] bg-linear-to-b from-[#8fa6ea] via-[#7390e0] to-[#7f98e4]">
        <svg viewBox="0 0 8 7" className="h-[7px] w-2"><path d="M0 0h8v7H0z" fill="#f4f0dc" /><path d="M0 0h8v2H0z" fill="#205a50" /><path d="M0 4h8M3 2v5" stroke="#668" strokeWidth=".6" /></svg>
        <h2 className="flex-1 font-['Lato',sans-serif] text-[7px] leading-[10px] font-bold text-[#dfe6fb]">EX4 - Job Info</h2>
        <WindowButtons dim />
      </header>
      <form className="flex flex-1 flex-col bg-[#ece9d8] pt-[7px] pl-1" onSubmit={(e) => e.preventDefault()}>
        <div className="flex w-[112px] flex-col leading-[9px] whitespace-nowrap">
          <div className="flex flex-col gap-px">
            <Field id="job" label="Job" />
            <Field id="client" label="Client" />
          </div>
          <div className="mt-[6px] flex flex-col gap-px">
            <Field id="jobno" label="Job No." />
            <Field id="part" label="Part" />
            <Field id="ref" label="Ref" />
          </div>
          <fieldset className="mt-1 -ml-[2px] border border-[#cfcbb9] px-[3px] pt-[3px]">
            <legend className="ml-px px-[2px] leading-[8px]">File</legend>
            {fileRows.map(([k, v], i) => (
              <div key={k} className="flex h-[11px] items-center">
                <span className="w-[33px] shrink-0">{k}</span>
                <span className="w-[3px] shrink-0">:</span>
                <span className="flex-1">{v}</span>
                {i === 2 && <span className="mr-[10px]">12:46 AM</span>}
                {i === 3 && (
                  <button type="button" className="-mr-px h-[11px] w-[31px] border border-t-white border-r-[#8a8678] border-b-[#8a8678] border-l-white leading-[8px]">
                    More...
                  </button>
                )}
              </div>
            ))}
          </fieldset>
          <div className="mt-[8px] grid grid-cols-[16px_30px_28px_29px] items-center gap-x-[3px] gap-y-[2px]">
            <span />
            <span id="eng">Engineer</span>
            <span id="chk">Checker</span>
            <span id="app">Approved</span>
            <span id="nm">Name</span>
            <input aria-labelledby="nm eng" className={fieldCls} />
            <input aria-labelledby="nm chk" className={fieldCls} />
            <input aria-labelledby="nm app" className={fieldCls} />
            <span id="dt">Date</span>
            <input aria-labelledby="dt eng" defaultValue="01-May-11" className={fieldCls} />
            <input aria-labelledby="dt chk" className={fieldCls} />
            <input aria-labelledby="dt app" className={fieldCls} />
          </div>
          <label htmlFor="comment" className="mt-[5px]">Comment</label>
          <div className="mt-px flex h-[52px] border-t border-l border-[#77746a] bg-white">
            <textarea id="comment" className="min-w-0 flex-1 resize-none text-[6px]" />
            <div className="flex w-2 flex-col justify-between bg-[#f6f5ef]">
              <svg viewBox="0 0 8 8" className="size-2 bg-[#ece9d8]"><path d="M2 5l2-2 2 2" fill="none" stroke="#b2ae9f" /></svg>
              <svg viewBox="0 0 8 8" className="size-2 bg-[#ece9d8]"><path d="M2 3l2 2 2-2" fill="none" stroke="#b2ae9f" /></svg>
            </div>
          </div>
          <button type="button" className="mt-[6px] ml-8 h-3 w-[38px] border border-t-white border-r-[#77746a] border-b-[#77746a] border-l-white">
            Help
          </button>
        </div>
      </form>
    </section>
  );
}

const tasks = [
  { label: "7% of 3 files - Downl...", color: "#e8741c", active: false },
  { label: "Cara Merubah Tampil...", color: "#e8d060", active: false },
  { label: "STAAD.Pro - EX4", color: "#a01c34", active: true },
  { label: "Document - WordPad", color: "#e8ecfa", active: false },
];

function Taskbar() {
  return (
    <footer className="flex h-[14px] shrink-0 items-stretch bg-linear-to-b from-[#3f86f2] via-[#245bdb] to-[#1f4fc4] text-white">
      <button type="button" className="flex w-[49px] items-center gap-[2px] rounded-r-[5px] bg-linear-to-b from-[#5eac56] via-[#3c953c] to-[#2f7d32] pl-[6px] font-['Lato',sans-serif] text-[9px] leading-[12px] font-bold italic">
        <svg viewBox="0 0 9 9" className="size-[9px]">
          <path d="M1 1q2-1 3 0v3q-1-1-3 0z" fill="#f05a28" />
          <path d="M5 1q1 1 3.500 0v3Q6 5 5 4z" fill="#8fd048" />
          <path d="M.5 5q2-1 3.500 0v3q-1-1-3.500 0z" fill="#4d9cf5" />
          <path d="M5 5q1 1 3 0v3Q6 9 5 8z" fill="#fccf3c" />
        </svg>
        start
      </button>
      <div className="flex w-[51px] items-center gap-[3px] pl-[5px]">
        <svg viewBox="0 0 9 9" className="size-[9px]"><path d="M1 8V4q0-3 3.500-3T8 4v4z" fill="#dcecf8" /><path d="M3 6v2M6 6v2" stroke="#4a78b8" /></svg>
        <svg viewBox="0 0 9 9" className="size-[9px]"><circle cx="4.500" cy="5" r="3.500" fill="#f08a24" /><circle cx="5" cy="5" r="1.700" fill="#fff" /><path d="M1 2h4" stroke="#f8c050" strokeWidth="1.5" /></svg>
        <svg viewBox="0 0 9 9" className="size-[9px]"><circle cx="4.500" cy="4.500" r="4" fill="#e03c30" /><path d="M4.500 4.500L1 7a4 4 0 003.500 1.500z" fill="#34a048" /><path d="M4.500 4.500h4a4 4 0 01-4 4z" fill="#f8d030" /><circle cx="4.500" cy="4.500" r="1.700" fill="#4a8cf0" stroke="#fff" strokeWidth=".7" /></svg>
        <span className="text-[7px] leading-[8px]">»</span>
      </div>
      <nav className="flex flex-1 gap-px py-px">
        {tasks.map((t) => (
          <button
            key={t.label}
            type="button"
            className={`flex w-[79px] items-center gap-1 rounded-[2px] pl-[5px] font-['Lato',sans-serif] text-[6px] leading-[8px] whitespace-nowrap ${t.active ? "bg-[#1c4aae]" : "bg-[#3c81f0]"}`}
          >
            <svg viewBox="0 0 8 8" className="size-2 shrink-0"><path d="M1 1h6v6H1z" fill={t.color} /><path d="M2 3h4M4 5h2" stroke="#2b4fa8" /></svg>
            {t.label}
          </button>
        ))}
      </nav>
      <span className="self-center pr-[6px]">IN</span>
      <div className="flex w-[55px] items-center bg-linear-to-b from-[#2fb0f4] via-[#129bea] to-[#0f86d6]">
        <svg viewBox="0 0 9 9" className="-ml-1 size-[9px]"><circle cx="4.500" cy="4.500" r="4" fill="#4aa8f4" stroke="#d4eafc" strokeWidth=".7" /><path d="M5.500 2.500l-2 2 2 2" fill="none" stroke="#fff" strokeWidth="1.2" /></svg>
        <svg viewBox="0 0 9 9" className="size-[9px]"><path d="M1 3h2v3H1zM6 3h2v3H6zM3 4.500h3" fill="#d82830" stroke="#d82830" /></svg>
        <svg viewBox="0 0 9 9" className="size-[9px]"><path d="M1 1h7v4L4.500 8.500 1 5z" fill="#d02030" stroke="#f0a0a0" strokeWidth=".5" /><path d="M3 3l3 3M6 3L3 6" stroke="#fff" /></svg>
        <svg viewBox="0 0 9 9" className="size-[9px]"><circle cx="4.500" cy="4.500" r="3.800" fill="#f0b838" /><path d="M3 3h3v3H3z" fill="#fbe8a8" /></svg>
        <time className="ml-1">8:27</time>
      </div>
    </footer>
  );
}

export default function App() {
  return (
    <div className="flex h-screen flex-col overflow-hidden bg-[#ece9d8] font-['Liberation_Sans',sans-serif] text-[6px] leading-[9px] text-[#111]">
      <header className="flex h-[13px] shrink-0 items-center gap-[2px] bg-linear-to-b from-[#2a83f8] via-[#0054e3] to-[#0458ea] pr-px pl-[2px]">
        <svg viewBox="0 0 7 9" className="h-[9px] w-[7px]"><path d="M1 1h5M1 4h5M1 7h5M2 1v7M5 1v7" stroke="#6e1238" strokeWidth="1.5" /></svg>
        <h1 className="flex-1 font-['Lato',sans-serif] text-[7px] leading-[10px] font-bold text-white">STAAD.Pro - EX4</h1>
        <WindowButtons />
      </header>
      <nav className="flex h-[11px] shrink-0 items-center gap-[5px] pl-[3px]">
        {menus.map((m) => (
          <button key={m} type="button">{m}</button>
        ))}
      </nav>
      <Toolbars />
      <main className="flex min-h-0 flex-1">
        <SideTools />
        <ModeTabs />
        <section className="flex min-w-0 flex-1 flex-col bg-[#0c3fd0] px-[3px] pb-[3px]">
          <header className="flex h-4 shrink-0 items-center gap-[3px] bg-linear-to-b from-[#2a83f8] via-[#0054e3] to-[#0458ea]">
            <svg viewBox="0 0 8 7" className="h-[7px] w-2"><path d="M0 0h8v7H0z" fill="#f4f0e8" /><path d="M2 2h4v3H2z" fill="#b03030" /></svg>
            <h2 className="flex-1 font-['Lato',sans-serif] text-[7px] leading-[10px] font-bold text-white">EX4 - Whole Structure</h2>
            <WindowButtons />
          </header>
          <div className="relative min-h-0 flex-1 bg-black">
            <StructureView />
            <span className="absolute right-[5px] bottom-[5px] bg-white px-px font-['Liberation_Mono',monospace] text-[6px] leading-[8px] font-bold text-[#18d818]">
              Load 1
            </span>
          </div>
        </section>
        <JobInfo />
      </main>
      <div className="flex h-[11px] shrink-0 items-center border-t border-white pl-px whitespace-nowrap">
        <span className="flex-1">For Help, press F1</span>
        <span className="w-[45px] border-l border-[#aaa697] pl-px">Modeling Mode</span>
        <span className="w-[91px] border-l border-[#aaa697] pl-px">Load 1 : (D.L)</span>
        <span className="w-[31px]">Input Units:</span>
        <span className="w-[20px] border-l border-[#aaa697] pl-px">kg-cm</span>
      </div>
      <Taskbar />
    </div>
  );
}
